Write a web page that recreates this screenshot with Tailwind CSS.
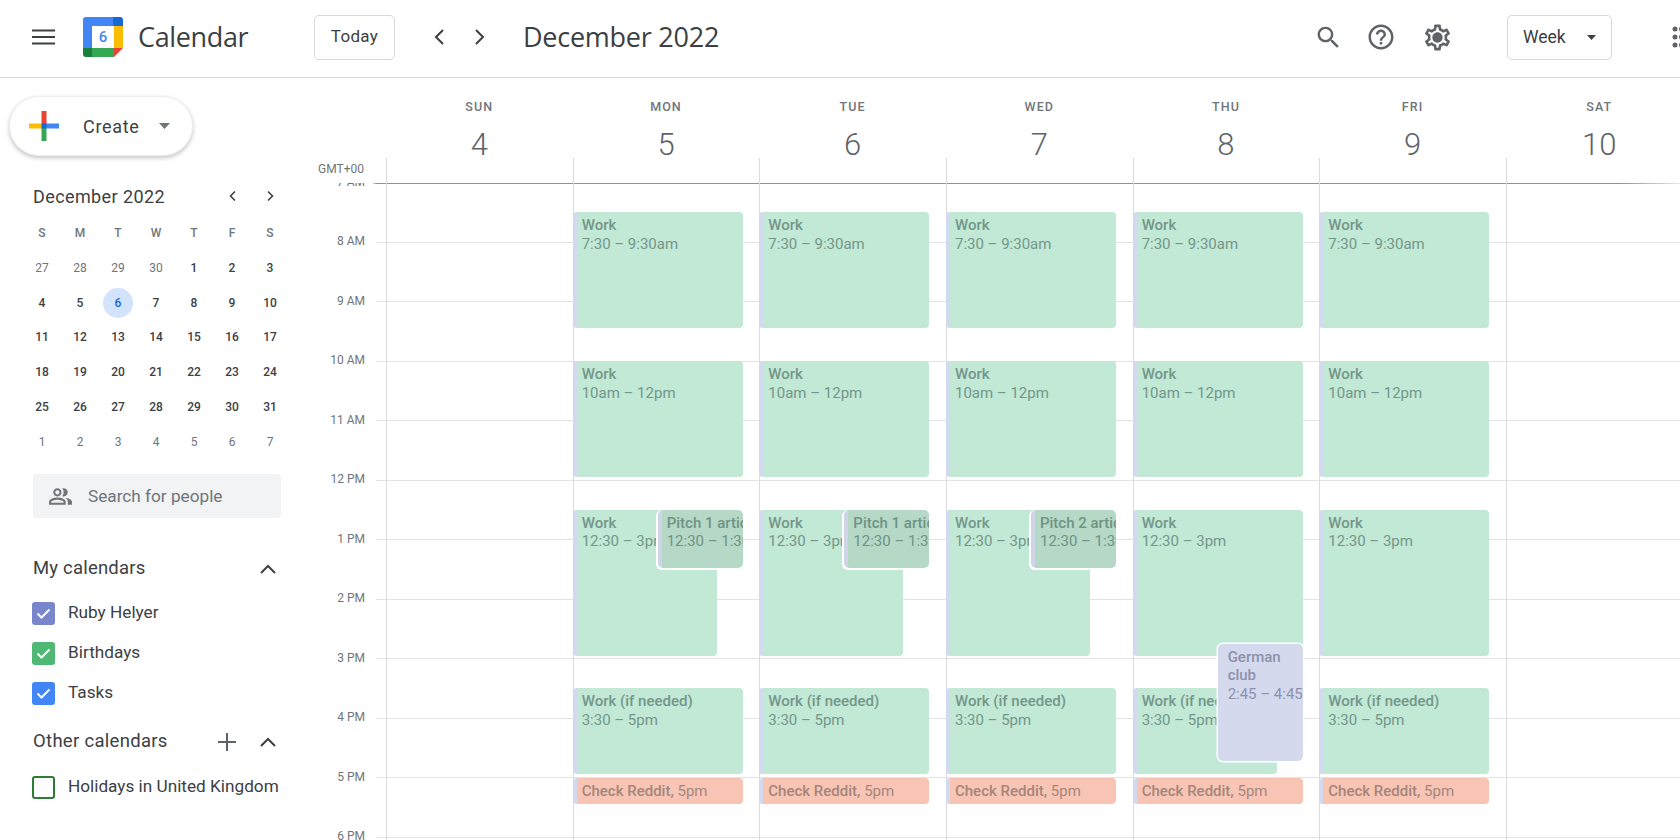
<!DOCTYPE html>
<html lang="en">
<head>
  <meta charset="UTF-8" />
  <title>Calendar - Week of December 4, 2022</title>
  <script src="https://cdn.jsdelivr.net/npm/@tailwindcss/browser@4"></script>
</head>
<body class="bg-white font-['Roboto',sans-serif] text-[#3c4043] overflow-hidden">
<div class="w-[1680px] h-[840px] flex flex-col overflow-hidden">

  <!-- top bar -->
  <header class="h-[78px] shrink-0 border-b border-[#d5d7da] flex items-center pl-[32px] pb-[3px] overflow-hidden">
    <svg class="w-[23px] h-[16px] shrink-0" viewBox="0 0 23 16"><path d="M0 1.5h23M0 8h23M0 14.5h23" stroke="#3c4043" stroke-width="2"/></svg>
    <div class="ml-[28px] w-[40px] h-[40px] shrink-0 relative">
      <svg class="w-[40px] h-[40px]" viewBox="0 0 40 40">
        <path d="M3 0h27v9H9v22H0V3a3 3 0 0 1 3-3z" fill="#4285f4"/>
        <path d="M30 0h7a3 3 0 0 1 3 3v6H30z" fill="#1967d2"/>
        <path d="M31 9h9v22h-9z" fill="#fbbc04"/>
        <path d="M9 31h22v9H9z" fill="#34a853"/>
        <path d="M0 31h9v9H3a3 3 0 0 1-3-3z" fill="#188038"/>
        <path d="M31 31h9l-9 9z" fill="#ea4335"/>
      </svg>
      <span class="absolute left-[9px] top-[9px] w-[22px] h-[22px] flex items-center justify-center text-[15px] font-medium text-[#4285f4]">6</span>
    </div>
    <span class="ml-[15px] w-[176px] shrink-0 text-[27px] text-[#3c4043] font-['Open_Sans',sans-serif] tracking-[-0.35px]">Calendar</span>
    <button class="w-[81px] h-[45px] shrink-0 border border-[#d5d7da] rounded-[5px] text-[17px] tracking-[0.3px] text-[#3c4043]">Today</button>
    <svg class="ml-[33px] w-[24px] h-[24px] shrink-0" viewBox="0 0 24 24"><path d="M15 5l-7 7 7 7" fill="none" stroke="#3c4043" stroke-width="2"/></svg>
    <svg class="ml-[15px] w-[24px] h-[24px] shrink-0" viewBox="0 0 24 24"><path d="M9 5l7 7-7 7" fill="none" stroke="#3c4043" stroke-width="2"/></svg>
    <h1 class="ml-[32px] w-[790px] shrink-0 text-[27px] text-[#3c4043] font-['Open_Sans',sans-serif] tracking-[-0.25px]">December 2022</h1>
    <svg class="ml-[1px] w-[29px] h-[29px] shrink-0" viewBox="0 0 24 24" fill="#5f6368"><path d="M15.5 14h-.79l-.28-.27C15.41 12.59 16 11.11 16 9.5 16 5.91 13.09 3 9.5 3S3 5.91 3 9.5 5.91 16 9.5 16c1.61 0 3.09-.59 4.23-1.57l.27.28v.79l5 4.99L20.49 19l-4.99-5zm-6 0C7.01 14 5 11.99 5 9.5S7.01 5 9.5 5 14 7.01 14 9.5 11.99 14 9.5 14z"/></svg>
    <svg class="ml-[22.5px] w-[30px] h-[30px] shrink-0" viewBox="0 0 24 24" fill="#5f6368"><path d="M11 18h2v-2h-2v2zm1-16C6.48 2 2 6.48 2 12s4.48 10 10 10 10-4.48 10-10S17.52 2 12 2zm0 18c-4.41 0-8-3.59-8-8s3.59-8 8-8 8 3.59 8 8-3.59 8-8 8zm0-14c-2.21 0-4 1.79-4 4h2c0-1.1.9-2 2-2s2 .9 2 2c0 2-3 1.75-3 5h2c0-2.25 3-2.5 3-5 0-2.21-1.79-4-4-4z"/></svg>
    <svg class="ml-[26.5px] w-[31px] h-[31px] shrink-0" viewBox="0 0 24 24" fill="#5f6368"><path d="M19.43 12.98c.04-.32.07-.64.07-.98 0-.34-.03-.66-.07-.98l2.11-1.65c.19-.15.24-.42.12-.64l-2-3.46c-.09-.16-.26-.25-.44-.25-.06 0-.12.01-.17.03l-2.49 1c-.52-.4-1.08-.73-1.69-.98l-.38-2.65C14.46 2.18 14.25 2 14 2h-4c-.25 0-.46.18-.49.42l-.38 2.65c-.61.25-1.17.59-1.69.98l-2.49-1c-.06-.02-.12-.03-.18-.03-.17 0-.34.09-.43.25l-2 3.46c-.13.22-.07.49.12.64l2.11 1.65c-.04.32-.07.65-.07.98 0 .33.03.66.07.98l-2.11 1.65c-.19.15-.24.42-.12.64l2 3.46c.09.16.26.25.44.25.06 0 .12-.01.17-.03l2.49-1c.52.4 1.08.73 1.69.98l.38 2.65c.03.24.24.42.49.42h4c.25 0 .46-.18.49-.42l.38-2.65c.61-.25 1.17-.59 1.69-.98l2.49 1c.06.02.12.03.18.03.17 0 .34-.09.43-.25l2-3.46c.12-.22.07-.49-.12-.64l-2.11-1.65zm-1.98-1.71c.04.31.05.52.05.73 0 .21-.02.43-.05.73l-.14 1.13.89.7 1.08.84-.7 1.21-1.27-.51-1.04-.42-.9.68c-.43.32-.84.56-1.25.73l-1.06.43-.16 1.13-.2 1.35h-1.4l-.19-1.35-.16-1.13-1.06-.43c-.43-.18-.83-.41-1.23-.71l-.91-.7-1.06.43-1.27.51-.7-1.21 1.08-.84.89-.7-.14-1.13c-.03-.31-.05-.54-.05-.74s.02-.43.05-.73l.14-1.13-.89-.7-1.08-.84.7-1.21 1.27.51 1.04.42.9-.68c.43-.32.84-.56 1.25-.73l1.06-.43.16-1.13.2-1.35h1.39l.19 1.35.16 1.13 1.06.43c.43.18.83.41 1.23.71l.91.7 1.06-.43 1.27-.51.7 1.21-1.07.85-.89.7.14 1.13zM12 8c-2.21 0-4 1.79-4 4s1.79 4 4 4 4-1.79 4-4-1.79-4-4-4z"/></svg>
    <button class="ml-[54px] w-[105px] h-[45px] shrink-0 border border-[#d5d7da] rounded-[5px] flex items-center pl-[15px] text-[17.5px] text-[#3c4043]">Week<svg class="ml-[21px] w-[9px] h-[5px]" viewBox="0 0 9 5"><path d="M0 0h9L4.5 5z" fill="#3c4043"/></svg></button>
    <svg class="ml-[60px] w-[24px] h-[24px] shrink-0" viewBox="0 0 24 24" fill="#5f6368"><circle cx="3" cy="4" r="2.5"/><circle cx="9.5" cy="4" r="2.5"/><circle cx="3" cy="12" r="2.5"/><circle cx="9.5" cy="12" r="2.5"/><circle cx="3" cy="20" r="2.5"/><circle cx="9.5" cy="20" r="2.5"/></svg>
  </header>

  <div class="flex flex-1 min-h-0">
    <!-- sidebar -->
    <aside class="w-[300px] shrink-0 flex flex-col">
      <button class="ml-[9px] mt-[18px] w-[184px] h-[60px] rounded-full bg-white border border-[#eceef0] shadow-[0_2px_4px_rgba(60,64,67,0.3)] flex items-center pl-[19px]">
        <svg class="w-[30px] h-[30px] shrink-0" viewBox="0 0 30 30">
          <path d="M0 12.5h14v5H0z" fill="#fbbc04"/>
          <path d="M17 12.5h13v5H17z" fill="#4285f4"/>
          <path d="M12.5 0h5v13h-5z" fill="#ea4335"/>
          <path d="M12.5 17h5v13h-5z" fill="#34a853"/>
          <path d="M12.5 12.5h5v5h-5z" fill="#1967d2"/>
        </svg>
        <span class="ml-[24px] text-[18px] tracking-[0.7px] text-[#3c4043]">Create</span>
        <svg class="ml-[19px] w-[11px] h-[6px]" viewBox="0 0 11 6"><path d="M0 0h11L5.5 6z" fill="#70757a"/></svg>
      </button>

      <!-- mini calendar -->
      <div class="mt-[28px] ml-[33px] w-[248px] h-[24px] flex items-center">
        <span class="text-[18px] tracking-[0.4px] text-[#3c4043]">December 2022</span>
        <svg class="ml-auto mr-[23px] w-[14px] h-[14px]" viewBox="0 0 14 14"><path d="M9 2.5L4.5 7 9 11.5" fill="none" stroke="#3c4043" stroke-width="1.6"/></svg>
        <svg class="mr-[4px] w-[14px] h-[14px]" viewBox="0 0 14 14"><path d="M5 2.5L9.5 7 5 11.5" fill="none" stroke="#3c4043" stroke-width="1.6"/></svg>
      </div>
      <div class="mt-[7.6px] ml-[23px] w-[266px] grid grid-cols-7 auto-rows-[34.8px] items-center justify-items-center text-[12px] font-medium text-[#3c4043]">
        <span class="text-[#70757a]">S</span><span class="text-[#70757a]">M</span><span class="text-[#70757a]">T</span><span class="text-[#70757a]">W</span><span class="text-[#70757a]">T</span><span class="text-[#70757a]">F</span><span class="text-[#70757a]">S</span>
        <span class="text-[#70757a] font-normal">27</span><span class="text-[#70757a] font-normal">28</span><span class="text-[#70757a] font-normal">29</span><span class="text-[#70757a] font-normal">30</span><span>1</span><span>2</span><span>3</span>
        <span>4</span><span>5</span><span class="w-[30px] h-[30px] rounded-full bg-[#d2e3fc] text-[#1967d2] flex items-center justify-center">6</span><span>7</span><span>8</span><span>9</span><span>10</span>
        <span>11</span><span>12</span><span>13</span><span>14</span><span>15</span><span>16</span><span>17</span>
        <span>18</span><span>19</span><span>20</span><span>21</span><span>22</span><span>23</span><span>24</span>
        <span>25</span><span>26</span><span>27</span><span>28</span><span>29</span><span>30</span><span>31</span>
        <span class="text-[#70757a] font-normal">1</span><span class="text-[#70757a] font-normal">2</span><span class="text-[#70757a] font-normal">3</span><span class="text-[#70757a] font-normal">4</span><span class="text-[#70757a] font-normal">5</span><span class="text-[#70757a] font-normal">6</span><span class="text-[#70757a] font-normal">7</span>
      </div>

      <!-- search for people -->
      <div class="mt-[15px] ml-[33px] w-[248px] h-[44px] shrink-0 rounded-[4px] bg-[#f1f3f4] flex items-center pl-[15px]">
        <svg class="w-[25px] h-[25px] shrink-0" viewBox="0 0 24 24" fill="#70757a"><path d="M16.67 13.13C18.04 14.06 19 15.32 19 17v3h4v-3c0-2.18-3.57-3.47-6.33-3.87z"/><path d="M15 12c2.21 0 4-1.79 4-4s-1.79-4-4-4c-.47 0-.91.1-1.33.24C14.5 5.27 15 6.58 15 8s-.5 2.73-1.33 3.76c.42.14.86.24 1.33.24z"/><path d="M9 12c2.21 0 4-1.79 4-4s-1.79-4-4-4-4 1.79-4 4 1.79 4 4 4zm0-6c1.1 0 2 .9 2 2s-.9 2-2 2-2-.9-2-2 .9-2 2-2z"/><path d="M9 13c-2.67 0-8 1.34-8 4v3h16v-3c0-2.66-5.33-4-8-4zm6 5H3v-.99C3.2 16.29 6.3 15 9 15s5.8 1.29 6 2z"/></svg>
        <span class="ml-[15px] pt-[1px] text-[17.2px] text-[#70757a]">Search for people</span>
      </div>

      <!-- my calendars -->
      <div class="mt-[39px] ml-[33px] w-[248px] h-[24px] shrink-0 flex items-center">
        <span class="text-[18.5px] tracking-[0.2px] text-[#3c4043]">My calendars</span>
        <svg class="ml-auto mr-[5px] w-[16px] h-[10px]" viewBox="0 0 16 10"><path d="M1 9l7-7 7 7" fill="none" stroke="#3c4043" stroke-width="2"/></svg>
      </div>
      <div class="mt-[12px] ml-[32px] flex flex-col">
        <div class="h-[40px] flex items-center">
          <span class="w-[23px] h-[23px] rounded-[3px] bg-[#7986cb] flex items-center justify-center"><svg class="w-[17px] h-[17px]" viewBox="0 0 17 17"><path d="M2.5 8.5l4 4 8-8" fill="none" stroke="#fff" stroke-width="2"/></svg></span>
          <span class="ml-[13px] text-[17.2px] text-[#3c4043]">Ruby Helyer</span>
        </div>
        <div class="h-[40px] flex items-center">
          <span class="w-[23px] h-[23px] rounded-[3px] bg-[#4fb874] flex items-center justify-center"><svg class="w-[17px] h-[17px]" viewBox="0 0 17 17"><path d="M2.5 8.5l4 4 8-8" fill="none" stroke="#fff" stroke-width="2"/></svg></span>
          <span class="ml-[13px] text-[17.2px] text-[#3c4043]">Birthdays</span>
        </div>
        <div class="h-[40px] flex items-center">
          <span class="w-[23px] h-[23px] rounded-[3px] bg-[#4285f4] flex items-center justify-center"><svg class="w-[17px] h-[17px]" viewBox="0 0 17 17"><path d="M2.5 8.5l4 4 8-8" fill="none" stroke="#fff" stroke-width="2"/></svg></span>
          <span class="ml-[13px] text-[17.2px] text-[#3c4043]">Tasks</span>
        </div>
      </div>

      <!-- other calendars -->
      <div class="mt-[17px] ml-[33px] w-[248px] h-[24px] shrink-0 flex items-center">
        <span class="text-[18.5px] tracking-[0.3px] text-[#3c4043]">Other calendars</span>
        <svg class="ml-auto w-[18px] h-[18px]" viewBox="0 0 18 18"><path d="M9 0v18M0 9h18" stroke="#5f6368" stroke-width="2"/></svg>
        <svg class="ml-[24px] mr-[5px] w-[16px] h-[10px]" viewBox="0 0 16 10"><path d="M1 9l7-7 7 7" fill="none" stroke="#3c4043" stroke-width="2"/></svg>
      </div>
      <div class="mt-[13px] ml-[32px] h-[40px] flex items-center whitespace-nowrap">
        <span class="w-[23px] h-[23px] rounded-[3px] border-2 border-[#2e7d32]"></span>
        <span class="ml-[13px] text-[17.2px] text-[#3c4043]">Holidays in United Kingdom</span>
      </div>
    </aside>

    <!-- week view -->
    <main class="flex-1 min-w-0 flex flex-col overflow-hidden">
      <div class="h-[104.5px] shrink-0 flex pl-[86px] relative">
        <span class="absolute left-[18px] top-[84px] text-[12px] leading-[14px] text-[#70757a]">GMT+00</span>
        <div class="w-[186.67px] shrink-0 relative text-center"><div class="mt-[22px] text-[12.5px] leading-[14px] font-medium tracking-[1.1px] text-[#70757a]">SUN</div><div class="mt-[11px] text-[31px] leading-[40px] font-light text-[#5f6368]">4</div><span class="absolute left-0 bottom-0 h-[25px] border-l border-[#dadce0]"></span></div>
        <div class="w-[186.67px] shrink-0 relative text-center"><div class="mt-[22px] text-[12.5px] leading-[14px] font-medium tracking-[1.1px] text-[#70757a]">MON</div><div class="mt-[11px] text-[31px] leading-[40px] font-light text-[#5f6368]">5</div><span class="absolute left-0 bottom-0 h-[25px] border-l border-[#dadce0]"></span></div>
        <div class="w-[186.67px] shrink-0 relative text-center"><div class="mt-[22px] text-[12.5px] leading-[14px] font-medium tracking-[1.1px] text-[#70757a]">TUE</div><div class="mt-[11px] text-[31px] leading-[40px] font-light text-[#5f6368]">6</div><span class="absolute left-0 bottom-0 h-[25px] border-l border-[#dadce0]"></span></div>
        <div class="w-[186.67px] shrink-0 relative text-center"><div class="mt-[22px] text-[12.5px] leading-[14px] font-medium tracking-[1.1px] text-[#70757a]">WED</div><div class="mt-[11px] text-[31px] leading-[40px] font-light text-[#5f6368]">7</div><span class="absolute left-0 bottom-0 h-[25px] border-l border-[#dadce0]"></span></div>
        <div class="w-[186.67px] shrink-0 relative text-center"><div class="mt-[22px] text-[12.5px] leading-[14px] font-medium tracking-[1.1px] text-[#70757a]">THU</div><div class="mt-[11px] text-[31px] leading-[40px] font-light text-[#5f6368]">8</div><span class="absolute left-0 bottom-0 h-[25px] border-l border-[#dadce0]"></span></div>
        <div class="w-[186.67px] shrink-0 relative text-center"><div class="mt-[22px] text-[12.5px] leading-[14px] font-medium tracking-[1.1px] text-[#70757a]">FRI</div><div class="mt-[11px] text-[31px] leading-[40px] font-light text-[#5f6368]">9</div><span class="absolute left-0 bottom-0 h-[25px] border-l border-[#dadce0]"></span></div>
        <div class="w-[186.67px] shrink-0 relative text-center"><div class="mt-[22px] text-[12.5px] leading-[14px] font-medium tracking-[1.1px] text-[#70757a]">SAT</div><div class="mt-[11px] text-[31px] leading-[40px] font-light text-[#5f6368]">10</div><span class="absolute left-0 bottom-0 h-[25px] border-l border-[#dadce0]"></span></div>
        <span class="absolute left-[18px] right-0 bottom-0 h-px translate-y-px bg-[linear-gradient(to_right,#ffffff00_0px,#ffffff00_54px,#8f9296_58px,#8f9296_1300px,#ffffff00_1380px)]"></span>
      </div>

      <div class="flex-1 min-h-0 relative overflow-hidden flex">
        <!-- time labels -->
        <div class="w-[65px] shrink-0 flex flex-col items-end text-[12px] leading-[14px] text-[#70757a] -mt-[8px]">
          <span class="h-[59.5px] shrink-0">7 AM</span>
          <span class="h-[59.5px] shrink-0">8 AM</span>
          <span class="h-[59.5px] shrink-0">9 AM</span>
          <span class="h-[59.5px] shrink-0">10 AM</span>
          <span class="h-[59.5px] shrink-0">11 AM</span>
          <span class="h-[59.5px] shrink-0">12 PM</span>
          <span class="h-[59.5px] shrink-0">1 PM</span>
          <span class="h-[59.5px] shrink-0">2 PM</span>
          <span class="h-[59.5px] shrink-0">3 PM</span>
          <span class="h-[59.5px] shrink-0">4 PM</span>
          <span class="h-[59.5px] shrink-0">5 PM</span>
          <span class="h-[59.5px] shrink-0">6 PM</span>
        </div>

        <!-- hour lines -->
        <div class="absolute left-[76px] right-0 top-[0.5px] flex flex-col">
          <div class="h-[59.5px] shrink-0 border-b border-[#e2e3e6]"></div>
          <div class="h-[59.5px] shrink-0 border-b border-[#e2e3e6]"></div>
          <div class="h-[59.5px] shrink-0 border-b border-[#e2e3e6]"></div>
          <div class="h-[59.5px] shrink-0 border-b border-[#e2e3e6]"></div>
          <div class="h-[59.5px] shrink-0 border-b border-[#e2e3e6]"></div>
          <div class="h-[59.5px] shrink-0 border-b border-[#e2e3e6]"></div>
          <div class="h-[59.5px] shrink-0 border-b border-[#e2e3e6]"></div>
          <div class="h-[59.5px] shrink-0 border-b border-[#e2e3e6]"></div>
          <div class="h-[59.5px] shrink-0 border-b border-[#e2e3e6]"></div>
          <div class="h-[59.5px] shrink-0 border-b border-[#e2e3e6]"></div>
          <div class="h-[59.5px] shrink-0 border-b border-[#e2e3e6]"></div>
        </div>

        <!-- day columns -->
        <div class="ml-[21px] flex text-[15px] leading-[18.6px] whitespace-nowrap">
          <div class="w-[186.67px] h-[660px] shrink-0 relative border-l border-[#dadce0]"></div>

          <div class="w-[186.67px] h-[660px] shrink-0 relative border-l border-[#dadce0]">
            <div class="absolute -left-px top-[29.75px] w-[170px] h-[116px] rounded-[4px] overflow-hidden border-l-4 border-[#d3d9ef] bg-[#c2e8d6] pl-[5px] pt-[4px] text-[#73978a]"><div class="font-medium">Work</div><div>7:30 – 9:30am</div></div>
            <div class="absolute -left-px top-[178.5px] w-[170px] h-[116px] rounded-[4px] overflow-hidden border-l-4 border-[#d3d9ef] bg-[#c2e8d6] pl-[5px] pt-[4px] text-[#73978a]"><div class="font-medium">Work</div><div>10am – 12pm</div></div>
            <div class="absolute -left-px top-[327px] w-[144px] h-[146px] rounded-[4px] overflow-hidden border-l-4 border-[#d3d9ef] bg-[#c2e8d6] pl-[5px] pt-[4px] text-[#73978a]"><div class="font-medium">Work</div><div>12:30 – 3pm</div></div>
            <div class="absolute left-[84px] top-[327px] w-[85px] h-[58px] rounded-[5px] overflow-hidden border-l-4 border-[#cfd5e6] bg-[#b5d8c7] pl-[5px] pt-[4px] text-[#6f9384] shadow-[-1px_1px_0_1px_#ffffff] "><div class="font-medium">Pitch 1 article</div><div>12:30 – 1:30pm</div></div>
            <div class="absolute -left-px top-[505.75px] w-[170px] h-[86px] rounded-[4px] overflow-hidden border-l-4 border-[#d3d9ef] bg-[#c2e8d6] pl-[5px] pt-[4px] text-[#73978a]"><div class="font-medium">Work (if needed)</div><div>3:30 – 5pm</div></div>
            <div class="absolute -left-px top-[595px] w-[170px] h-[26.5px] rounded-[4px] overflow-hidden border-l-4 border-[#d3d9ef] bg-[#f8c5b5] pl-[5px] pt-[4px] text-[#a5857b]"><span class="font-medium">Check Reddit,</span> 5pm</div>
          </div>

          <div class="w-[186.67px] h-[660px] shrink-0 relative border-l border-[#dadce0]">
            <div class="absolute -left-px top-[29.75px] w-[170px] h-[116px] rounded-[4px] overflow-hidden border-l-4 border-[#d3d9ef] bg-[#c2e8d6] pl-[5px] pt-[4px] text-[#73978a]"><div class="font-medium">Work</div><div>7:30 – 9:30am</div></div>
            <div class="absolute -left-px top-[178.5px] w-[170px] h-[116px] rounded-[4px] overflow-hidden border-l-4 border-[#d3d9ef] bg-[#c2e8d6] pl-[5px] pt-[4px] text-[#73978a]"><div class="font-medium">Work</div><div>10am – 12pm</div></div>
            <div class="absolute -left-px top-[327px] w-[144px] h-[146px] rounded-[4px] overflow-hidden border-l-4 border-[#d3d9ef] bg-[#c2e8d6] pl-[5px] pt-[4px] text-[#73978a]"><div class="font-medium">Work</div><div>12:30 – 3pm</div></div>
            <div class="absolute left-[84px] top-[327px] w-[85px] h-[58px] rounded-[5px] overflow-hidden border-l-4 border-[#cfd5e6] bg-[#b5d8c7] pl-[5px] pt-[4px] text-[#6f9384] shadow-[-1px_1px_0_1px_#ffffff]"><div class="font-medium">Pitch 1 article</div><div>12:30 – 1:30pm</div></div>
            <div class="absolute -left-px top-[505.75px] w-[170px] h-[86px] rounded-[4px] overflow-hidden border-l-4 border-[#d3d9ef] bg-[#c2e8d6] pl-[5px] pt-[4px] text-[#73978a]"><div class="font-medium">Work (if needed)</div><div>3:30 – 5pm</div></div>
            <div class="absolute -left-px top-[595px] w-[170px] h-[26.5px] rounded-[4px] overflow-hidden border-l-4 border-[#d3d9ef] bg-[#f8c5b5] pl-[5px] pt-[4px] text-[#a5857b]"><span class="font-medium">Check Reddit,</span> 5pm</div>
          </div>

          <div class="w-[186.67px] h-[660px] shrink-0 relative border-l border-[#dadce0]">
            <div class="absolute -left-px top-[29.75px] w-[170px] h-[116px] rounded-[4px] overflow-hidden border-l-4 border-[#d3d9ef] bg-[#c2e8d6] pl-[5px] pt-[4px] text-[#73978a]"><div class="font-medium">Work</div><div>7:30 – 9:30am</div></div>
            <div class="absolute -left-px top-[178.5px] w-[170px] h-[116px] rounded-[4px] overflow-hidden border-l-4 border-[#d3d9ef] bg-[#c2e8d6] pl-[5px] pt-[4px] text-[#73978a]"><div class="font-medium">Work</div><div>10am – 12pm</div></div>
            <div class="absolute -left-px top-[327px] w-[144px] h-[146px] rounded-[4px] overflow-hidden border-l-4 border-[#d3d9ef] bg-[#c2e8d6] pl-[5px] pt-[4px] text-[#73978a]"><div class="font-medium">Work</div><div>12:30 – 3pm</div></div>
            <div class="absolute left-[84px] top-[327px] w-[85px] h-[58px] rounded-[5px] overflow-hidden border-l-4 border-[#cfd5e6] bg-[#b5d8c7] pl-[5px] pt-[4px] text-[#6f9384] shadow-[-1px_1px_0_1px_#ffffff]"><div class="font-medium">Pitch 2 article</div><div>12:30 – 1:30pm</div></div>
            <div class="absolute -left-px top-[505.75px] w-[170px] h-[86px] rounded-[4px] overflow-hidden border-l-4 border-[#d3d9ef] bg-[#c2e8d6] pl-[5px] pt-[4px] text-[#73978a]"><div class="font-medium">Work (if needed)</div><div>3:30 – 5pm</div></div>
            <div class="absolute -left-px top-[595px] w-[170px] h-[26.5px] rounded-[4px] overflow-hidden border-l-4 border-[#d3d9ef] bg-[#f8c5b5] pl-[5px] pt-[4px] text-[#a5857b]"><span class="font-medium">Check Reddit,</span> 5pm</div>
          </div>

          <div class="w-[186.67px] h-[660px] shrink-0 relative border-l border-[#dadce0]">
            <div class="absolute -left-px top-[29.75px] w-[170px] h-[116px] rounded-[4px] overflow-hidden border-l-4 border-[#d3d9ef] bg-[#c2e8d6] pl-[5px] pt-[4px] text-[#73978a]"><div class="font-medium">Work</div><div>7:30 – 9:30am</div></div>
            <div class="absolute -left-px top-[178.5px] w-[170px] h-[116px] rounded-[4px] overflow-hidden border-l-4 border-[#d3d9ef] bg-[#c2e8d6] pl-[5px] pt-[4px] text-[#73978a]"><div class="font-medium">Work</div><div>10am – 12pm</div></div>
            <div class="absolute -left-px top-[327px] w-[170px] h-[146px] rounded-[4px] overflow-hidden border-l-4 border-[#d3d9ef] bg-[#c2e8d6] pl-[5px] pt-[4px] text-[#73978a]"><div class="font-medium">Work</div><div>12:30 – 3pm</div></div>
            <div class="absolute -left-px top-[505.75px] w-[144px] h-[86px] rounded-[4px] overflow-hidden border-l-4 border-[#d3d9ef] bg-[#c2e8d6] pl-[5px] pt-[4px] text-[#73978a]"><div class="font-medium">Work (if needed)</div><div>3:30 – 5pm</div></div>
            <div class="absolute left-[84px] top-[461px] w-[85px] h-[117px] rounded-[5px] overflow-hidden bg-[#d5d9ee] pl-[10px] pt-[4px] text-[#8d91ad] shadow-[0_0_0_1.5px_#ffffff] whitespace-normal"><div class="font-medium w-[60px]">German club</div><div class="whitespace-nowrap">2:45 – 4:45pm</div></div>
            <div class="absolute -left-px top-[595px] w-[170px] h-[26.5px] rounded-[4px] overflow-hidden border-l-4 border-[#d3d9ef] bg-[#f8c5b5] pl-[5px] pt-[4px] text-[#a5857b]"><span class="font-medium">Check Reddit,</span> 5pm</div>
          </div>

          <div class="w-[186.67px] h-[660px] shrink-0 relative border-l border-[#dadce0]">
            <div class="absolute -left-px top-[29.75px] w-[170px] h-[116px] rounded-[4px] overflow-hidden border-l-4 border-[#d3d9ef] bg-[#c2e8d6] pl-[5px] pt-[4px] text-[#73978a]"><div class="font-medium">Work</div><div>7:30 – 9:30am</div></div>
            <div class="absolute -left-px top-[178.5px] w-[170px] h-[116px] rounded-[4px] overflow-hidden border-l-4 border-[#d3d9ef] bg-[#c2e8d6] pl-[5px] pt-[4px] text-[#73978a]"><div class="font-medium">Work</div><div>10am – 12pm</div></div>
            <div class="absolute -left-px top-[327px] w-[170px] h-[146px] rounded-[4px] overflow-hidden border-l-4 border-[#d3d9ef] bg-[#c2e8d6] pl-[5px] pt-[4px] text-[#73978a]"><div class="font-medium">Work</div><div>12:30 – 3pm</div></div>
            <div class="absolute -left-px top-[505.75px] w-[170px] h-[86px] rounded-[4px] overflow-hidden border-l-4 border-[#d3d9ef] bg-[#c2e8d6] pl-[5px] pt-[4px] text-[#73978a]"><div class="font-medium">Work (if needed)</div><div>3:30 – 5pm</div></div>
            <div class="absolute -left-px top-[595px] w-[170px] h-[26.5px] rounded-[4px] overflow-hidden border-l-4 border-[#d3d9ef] bg-[#f8c5b5] pl-[5px] pt-[4px] text-[#a5857b]"><span class="font-medium">Check Reddit,</span> 5pm</div>
          </div>

          <div class="w-[186.67px] h-[660px] shrink-0 relative border-l border-[#dadce0]"></div>
        </div>
      </div>
    </main>
  </div>
</div>
</body>
</html>
